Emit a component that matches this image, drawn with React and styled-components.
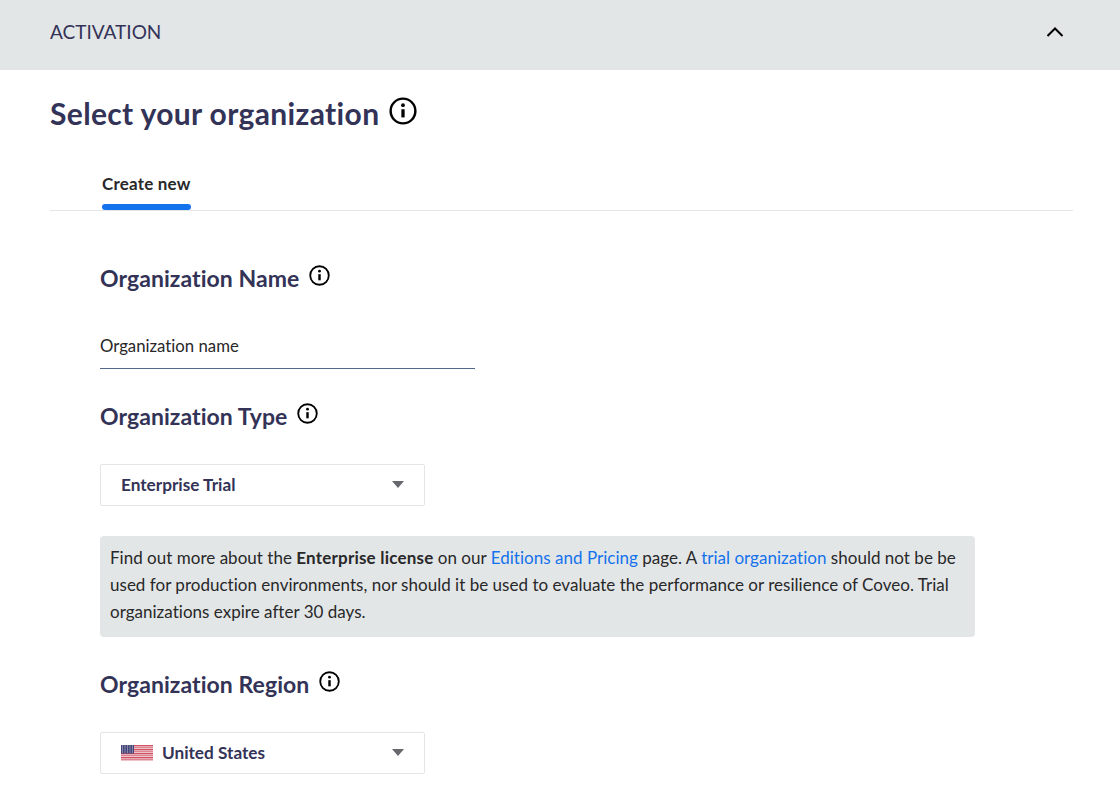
import React from 'react';
import styled, { createGlobalStyle } from 'styled-components';

const Global = createGlobalStyle`
  html, body { margin: 0; padding: 0; background: #fff; }
  body { font-family: Lato, "Open Sans", sans-serif; overflow: hidden; font-variant-ligatures: none; }
`;
const Page = styled.div`width: 1120px; height: 794px; overflow: hidden; background: #fff;`;
const Banner = styled.header`
  height: 70px; background: #e3e6e7; display: flex; align-items: center; justify-content: space-between;
  padding: 0 56px 7px 50px; box-sizing: border-box; color: #333357; font-size: 19px;
`;
const Body = styled.main`padding: 0 47px 0 50px;`;
const TitleRow = styled.div`display: flex; align-items: flex-start; gap: 10px; padding-top: 27px; height: 72px; box-sizing: border-box;`;
const Title = styled.h1`margin: 0; font-size: 30px; letter-spacing: 0.35px; line-height: 33px; font-weight: 700; color: #333357;`;
const InfoIcon = ({ size }) => (
  <svg width={size} height={size} viewBox="0 0 24 24" fill="none" stroke="#000" strokeWidth="2.1">
    <circle cx="12" cy="12" r="10.6" />
    <path d="M12 10.5v7" strokeWidth="2.8" />
    <circle cx="12" cy="7" r="1.6" fill="#000" stroke="none" />
  </svg>
);
const TabBar = styled.div`height: 68px; border-bottom: 1px solid #e3e6e7; padding-left: 52px; display: flex; align-items: flex-end;`;
const Tab = styled.div`
  position: relative; height: 66px; width: 89px; box-sizing: border-box; padding-top: 30px;
  font-size: 17px; letter-spacing: 0.2px; line-height: 20px; font-weight: 700; color: #282829; white-space: nowrap;
  &::after { content: ""; position: absolute; left: 0; right: 0; bottom: 0; height: 6px; background: #1372ec; border-radius: 3px; }
`;
const Form = styled.div`padding-left: 50px;`;
const Heading = styled.div`display: flex; align-items: flex-start; gap: 10px; height: 24px;`;
const HeadingText = styled.h2`margin: 0; font-size: 23px; letter-spacing: 0.06px; line-height: 26px; font-weight: 700; color: #333357;`;
const NameInput = styled.div`
  width: 375px; height: 41px; box-sizing: border-box; margin-top: 39px; border-bottom: 1px solid #52688a;
  font-size: 16.75px; line-height: 20px; color: #282829; padding-top: 8px;
`;
const Select = styled.div`
  width: 325px; height: 42px; box-sizing: border-box; border: 1px solid #e3e6e7; border-radius: 2px;
  display: flex; align-items: center; padding: 0 20px 1px; gap: 9px; color: #333357; font-size: 17.2px; font-weight: 700;
`;
const Caret = styled.span`
  margin-left: auto; width: 0; height: 0; border-left: 6.5px solid transparent; border-right: 6.5px solid transparent; border-top: 7px solid #67686d;
`;
const Notice = styled.div`
  width: 875px; height: 101px; box-sizing: border-box; margin-top: 30px; padding: 8px 10px;
  background: #e3e6e7; border-radius: 4px; font-size: 17px; letter-spacing: 0.02px; line-height: 27px; color: #282829;
  b { font-weight: 700; letter-spacing: 0.2px; }
  a { color: #1372ec; text-decoration: none; }
`;
const Section = styled.section`margin-top: ${p => p.$top}px;`;
const SelectWrap = styled.div`margin-top: ${p => p.$top}px;`;

const Flag = () => (
  <svg width="32" height="16" viewBox="0 0 32 16">
    <rect width="32" height="16" fill="#fff" />
    {[0, 2, 4, 6, 8, 10, 12, 14].map(y => (
      <rect key={y} y={y + 0.2} width="32" height="1.2" fill={y % 4 === 0 ? '#c8283f' : '#d4697a'} />
    ))}
    <rect width="13" height="8.5" fill="#45457a" />
    {[1, 3, 5, 7].map(y => [1.5, 4, 6.5, 9, 11.5].map(x => (
      <rect key={`${x}-${y}`} x={x - 0.5} y={y - 0.5} width="1" height="1" fill="#c9cbe0" />
    )))}
  </svg>
);

export default function App() {
  return (
    <Page>
      <Global />
      <Banner>
        <span>ACTIVATION</span>
        <svg width="18" height="18" viewBox="0 0 18 18" fill="none" stroke="#000" strokeWidth="2"><path d="M1.5 13 9 5.5 16.5 13" /></svg>
      </Banner>
      <Body>
        <TitleRow>
          <Title>Select your organization</Title>
          <InfoIcon size={28} />
        </TitleRow>
        <TabBar><Tab>Create new</Tab></TabBar>
        <Form>
          <Section $top={54}>
            <Heading>
              <HeadingText>Organization Name</HeadingText>
              <InfoIcon size={21} />
            </Heading>
            <NameInput>Organization name</NameInput>
          </Section>
          <Section $top={34}>
            <Heading>
              <HeadingText>Organization Type</HeadingText>
              <InfoIcon size={21} />
            </Heading>
          </Section>
          <SelectWrap $top={37}>
            <Select>Enterprise Trial<Caret /></Select>
          </SelectWrap>
          <Notice>
            Find out more about the <b>Enterprise license</b> on our <a>Editions and Pricing</a> page. A <a>trial organization</a> should not be be used for production environments, nor should it be used to evaluate the performance or resilience of Coveo. Trial organizations expire after 30 days.
          </Notice>
          <Section $top={34}>
            <Heading>
              <HeadingText>Organization Region</HeadingText>
              <InfoIcon size={21} />
            </Heading>
          </Section>
          <SelectWrap $top={37}>
            <Select><Flag />United States<Caret /></Select>
          </SelectWrap>
        </Form>
      </Body>
    </Page>
  );
}
